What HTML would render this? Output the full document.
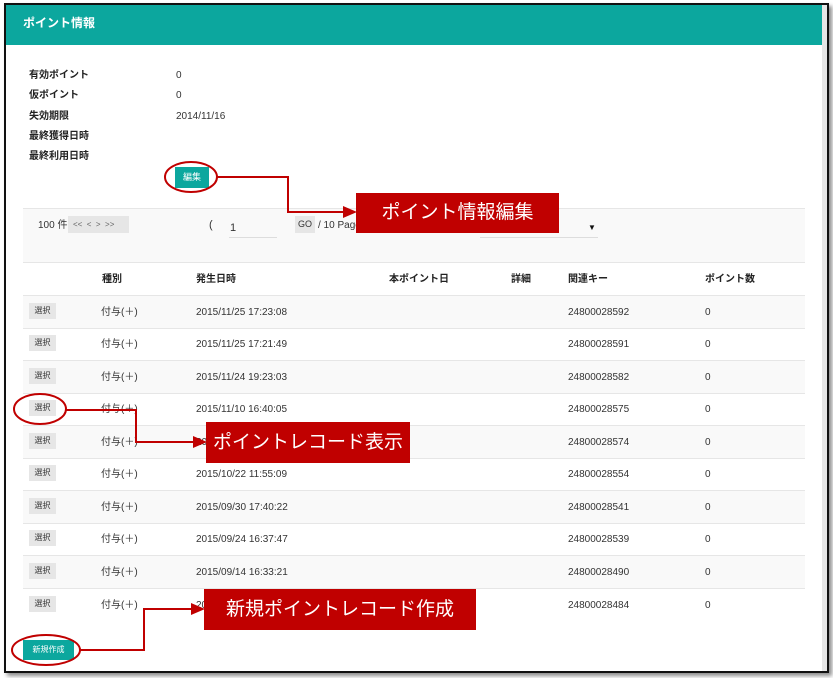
<!DOCTYPE html>
<html><head><meta charset="utf-8">
<style>
*{margin:0;padding:0;box-sizing:border-box}
body{width:833px;height:678px;background:#fff;position:relative;overflow:hidden;font-family:"Liberation Sans","Noto Sans CJK JP",sans-serif;color:#333}
.frame{position:absolute;left:4px;top:3px;width:825px;height:670px;border:2px solid #111;background:#fff;box-shadow:3px 3px 4px rgba(0,0,0,.45)}
.hdr{position:absolute;left:0;top:0;width:817px;height:40px;background:#0ca79e;color:#fff;font-size:12px;line-height:14px;font-weight:bold;padding:11px 0 0 17px}
.strip{position:absolute;right:0;top:0;width:5px;height:100%;background:#e6e6e6}
.a{position:absolute;font-size:10px;line-height:12px;white-space:nowrap;margin-top:2px}
.lbl{font-weight:bold;color:#222}
.btn{position:absolute;background:#0ca79e;color:#fff;font-size:9px;text-align:center}
.sel{position:absolute;left:29px;width:27px;height:16px;background:#e6e6e6;font-size:8px;line-height:16px;text-align:center;color:#333}
.row{position:absolute;left:23px;width:782px;height:33px;border-top:1px solid #e6e6e6}
.g{background:#f9f9f9}
.call{position:absolute;background:#c00000;color:#fff;font-size:19px;text-align:center}
</style></head><body>
<div class="frame">
<div class="hdr">ポイント情報</div>
<div class="strip"></div>
</div>
<div class="a lbl" style="left:29px;top:68px">有効ポイント</div><div class="a" style="left:176px;top:68px">0</div>
<div class="a lbl" style="left:29px;top:88px">仮ポイント</div><div class="a" style="left:176px;top:88px">0</div>
<div class="a lbl" style="left:29px;top:109px">失効期限</div><div class="a" style="left:176px;top:109px">2014/11/16</div>
<div class="a lbl" style="left:29px;top:129px">最終獲得日時</div>
<div class="a lbl" style="left:29px;top:149px">最終利用日時</div>
<div class="btn" style="left:175px;top:167px;width:34px;height:21px;line-height:21px">編集</div>

<div style="position:absolute;left:23px;top:208px;width:782px;height:55px;background:#f9f9f9;border-top:1px solid #e6e6e6"></div>
<div class="a" style="left:38px;top:218px">100 件</div>
<div class="a" style="left:68px;top:214px;width:61px;height:17px;background:#e6e6e6;font-size:8px;line-height:17px;padding-left:5px;color:#666">&lt;&lt; &nbsp;&lt; &nbsp;&gt; &nbsp;&gt;&gt;</div>
<div class="a" style="left:209px;top:217px;font-size:11px">(</div>
<div class="a" style="left:230px;top:220px;font-size:11px">1</div>
<div style="position:absolute;left:229px;top:237px;width:48px;height:1px;background:#ddd"></div>
<div class="a" style="left:295px;top:214px;width:20px;height:17px;background:#e6e6e6;font-size:9px;line-height:17px;text-align:center">GO</div>
<div class="a" style="left:318px;top:218px;font-size:10px">/ 10 Page</div>
<div class="a" style="left:588px;top:220px;font-size:8px;color:#111">▼</div>
<div style="position:absolute;left:480px;top:237px;width:118px;height:1px;background:#ddd"></div>

<div class="row" style="top:262px"></div>
<div class="a lbl" style="left:102px;top:272px">種別</div>
<div class="a lbl" style="left:196px;top:272px">発生日時</div>
<div class="a lbl" style="left:389px;top:272px">本ポイント日</div>
<div class="a lbl" style="left:511px;top:272px">詳細</div>
<div class="a lbl" style="left:568px;top:272px">関連キー</div>
<div class="a lbl" style="left:705px;top:272px">ポイント数</div>

<div class="row g" style="top:295px"></div>
<div class="row" style="top:328px"></div>
<div class="row g" style="top:360px"></div>
<div class="row" style="top:393px"></div>
<div class="row g" style="top:425px"></div>
<div class="row" style="top:458px"></div>
<div class="row g" style="top:490px"></div>
<div class="row" style="top:523px"></div>
<div class="row g" style="top:555px"></div>
<div class="row" style="top:588px"></div>

<div class="sel" style="top:303px">選択</div><div class="a" style="left:101px;top:305px">付与(＋)</div><div class="a" style="left:196px;top:305px">2015/11/25 17:23:08</div><div class="a" style="left:568px;top:305px">24800028592</div><div class="a" style="left:705px;top:305px">0</div>
<div class="sel" style="top:335px">選択</div><div class="a" style="left:101px;top:337px">付与(＋)</div><div class="a" style="left:196px;top:337px">2015/11/25 17:21:49</div><div class="a" style="left:568px;top:337px">24800028591</div><div class="a" style="left:705px;top:337px">0</div>
<div class="sel" style="top:368px">選択</div><div class="a" style="left:101px;top:370px">付与(＋)</div><div class="a" style="left:196px;top:370px">2015/11/24 19:23:03</div><div class="a" style="left:568px;top:370px">24800028582</div><div class="a" style="left:705px;top:370px">0</div>
<div class="sel" style="top:400px">選択</div><div class="a" style="left:101px;top:402px">付与(＋)</div><div class="a" style="left:196px;top:402px">2015/11/10 16:40:05</div><div class="a" style="left:568px;top:402px">24800028575</div><div class="a" style="left:705px;top:402px">0</div>
<div class="sel" style="top:433px">選択</div><div class="a" style="left:101px;top:435px">付与(＋)</div><div class="a" style="left:196px;top:435px">2015/11/05 10:20:11</div><div class="a" style="left:568px;top:435px">24800028574</div><div class="a" style="left:705px;top:435px">0</div>
<div class="sel" style="top:465px">選択</div><div class="a" style="left:101px;top:467px">付与(＋)</div><div class="a" style="left:196px;top:467px">2015/10/22 11:55:09</div><div class="a" style="left:568px;top:467px">24800028554</div><div class="a" style="left:705px;top:467px">0</div>
<div class="sel" style="top:498px">選択</div><div class="a" style="left:101px;top:500px">付与(＋)</div><div class="a" style="left:196px;top:500px">2015/09/30 17:40:22</div><div class="a" style="left:568px;top:500px">24800028541</div><div class="a" style="left:705px;top:500px">0</div>
<div class="sel" style="top:530px">選択</div><div class="a" style="left:101px;top:532px">付与(＋)</div><div class="a" style="left:196px;top:532px">2015/09/24 16:37:47</div><div class="a" style="left:568px;top:532px">24800028539</div><div class="a" style="left:705px;top:532px">0</div>
<div class="sel" style="top:563px">選択</div><div class="a" style="left:101px;top:565px">付与(＋)</div><div class="a" style="left:196px;top:565px">2015/09/14 16:33:21</div><div class="a" style="left:568px;top:565px">24800028490</div><div class="a" style="left:705px;top:565px">0</div>
<div class="sel" style="top:596px">選択</div><div class="a" style="left:101px;top:598px">付与(＋)</div><div class="a" style="left:196px;top:598px">2015/09/10 12:01:44</div><div class="a" style="left:568px;top:598px">24800028484</div><div class="a" style="left:705px;top:598px">0</div>

<div class="btn" style="left:23px;top:640px;width:51px;height:20px;line-height:20px;font-size:8px">新規作成</div>

<div class="call" style="left:356px;top:193px;width:203px;height:40px;line-height:40px">ポイント情報編集</div>
<div class="call" style="left:206px;top:422px;width:204px;height:41px;line-height:41px">ポイントレコード表示</div>
<div class="call" style="left:204px;top:589px;width:272px;height:41px;line-height:41px">新規ポイントレコード作成</div>

<svg width="833" height="678" style="position:absolute;left:0;top:0" fill="none" stroke="#c00000" stroke-width="2">
<ellipse cx="191" cy="177" rx="26" ry="15"/>
<polyline points="217,177 288,177 288,212 345,212"/>
<polygon points="343,206 357,212 343,218" fill="#c00000" stroke="none"/>
<ellipse cx="40" cy="409" rx="26" ry="15"/>
<polyline points="66,410 136,410 136,442 195,442"/>
<polygon points="193,436 207,442 193,448" fill="#c00000" stroke="none"/>
<ellipse cx="46" cy="650" rx="34" ry="15"/>
<polyline points="80,650 144,650 144,609 193,609"/>
<polygon points="191,603 205,609 191,615" fill="#c00000" stroke="none"/>
</svg>
</body></html>
